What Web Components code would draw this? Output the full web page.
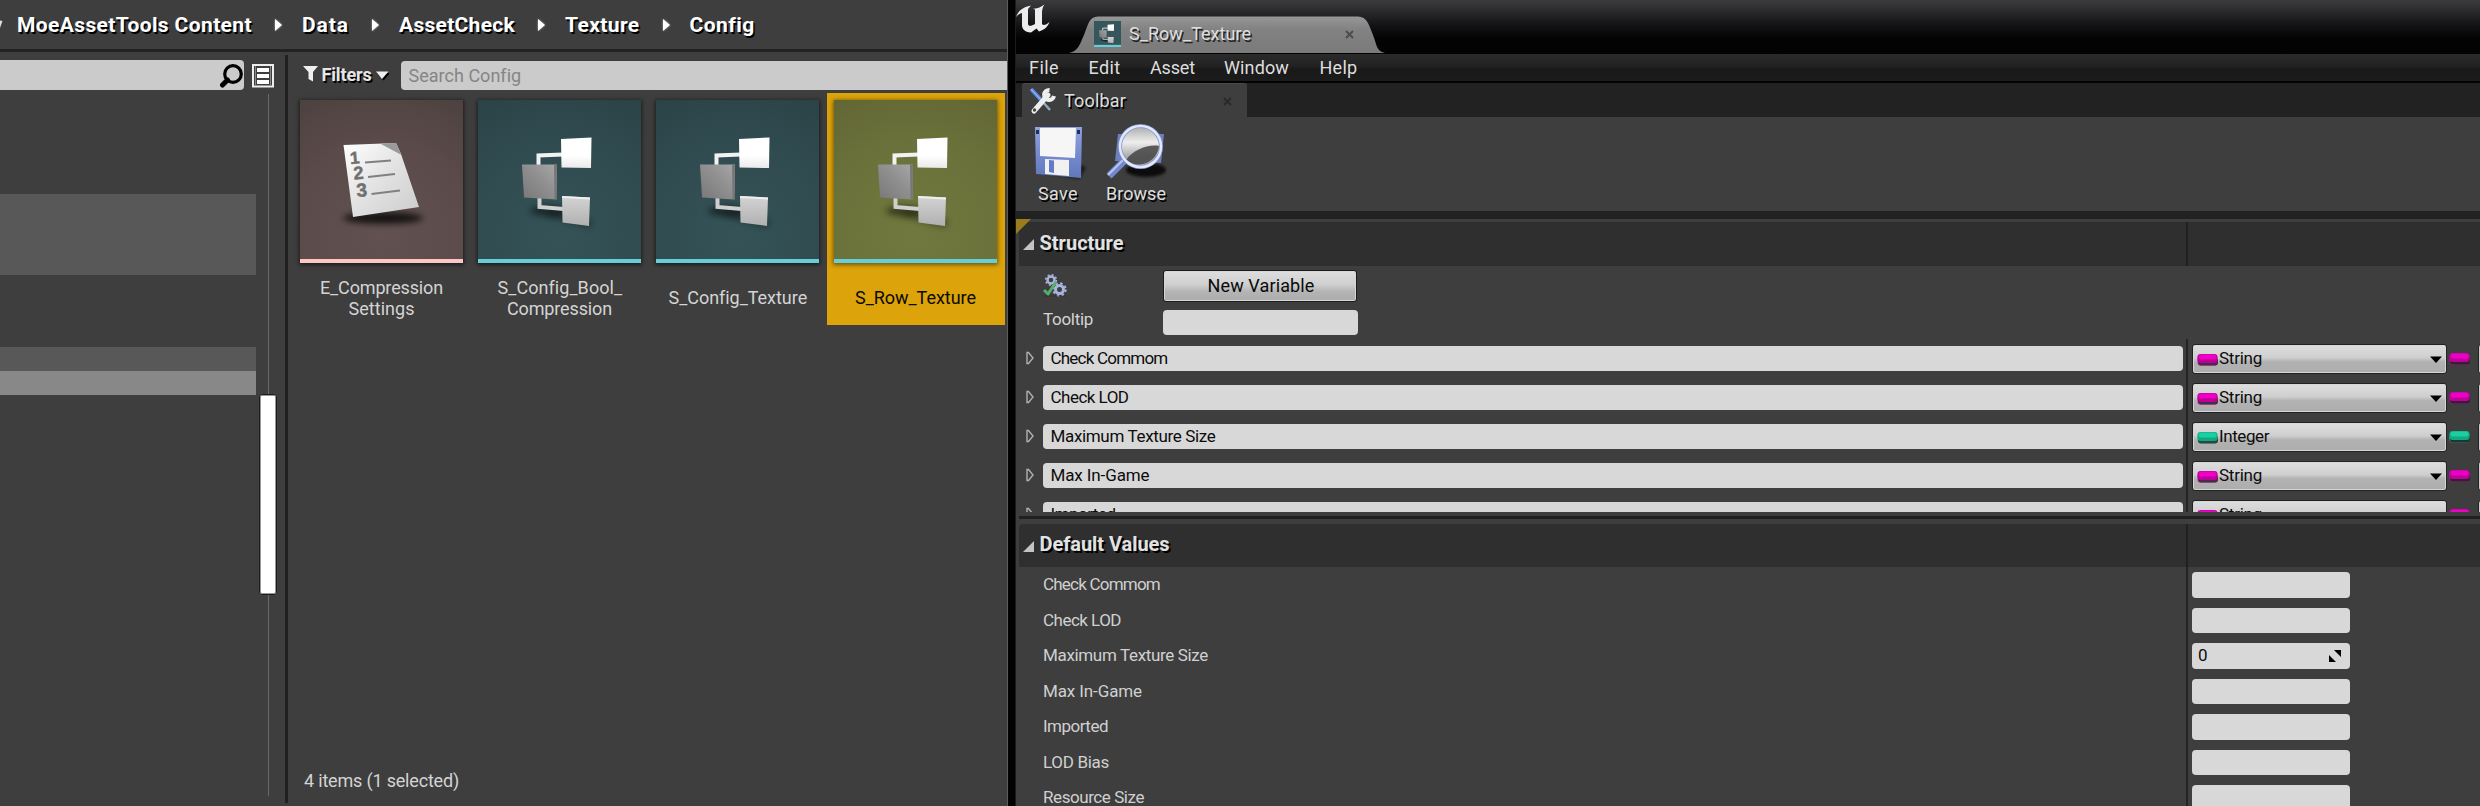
<!DOCTYPE html>
<html lang="en"><head><meta charset="utf-8"><title>Content Browser</title>
<style>
html,body{margin:0;height:806px;overflow:hidden;background:#3e3e3e}
body{display:flex;width:2480px;font:18px Roboto,"Liberation Sans",sans-serif;color:#d4d4d4}
</style></head><body>
<content-browser></content-browser>
<struct-editor></struct-editor>
<script>
const def=(name,html,init)=>customElements.define(name,class extends HTMLElement{
  constructor(){super();this.attachShadow({mode:'open'})}
  connectedCallback(){
    if(this.ready)return;this.ready=true;
    const t=document.createElement('template');
    t.innerHTML=typeof html==='function'?html(this):html;
    this.shadowRoot.append(t.content.cloneNode(true));
    if(init)init(this);
  }
});
const at=(e,n,d='')=>e.hasAttribute(n)?e.getAttribute(n):d;

/* Text label whose tracking is adjusted to fill a given width. */
def('ui-label',`<style>:host{display:inline-block;white-space:pre;flex:none}span{display:inline-block}</style><span><slot></slot></span>`,e=>{
  const w=+at(e,'w',0);if(!w)return;
  const s=e.shadowRoot.querySelector('span'),n=e.textContent.length;
  s.style.letterSpacing=((w-s.getBoundingClientRect().width)/n).toFixed(3)+'px';
  e.style.width=w+'px';
});

const structArt=`
 <g><ellipse cx="69" cy="111" rx="17" ry="5" fill="#000" opacity=".5" filter="url(#b)"/><path d="M66 116L112 128 114 120 84 108Z" fill="#000" opacity=".35" filter="url(#b)"/>
 <path d="M60.500 65V55.500L85 54.500" fill="none" stroke="#f2f2f2" stroke-width="4"/>
 <path d="M61.500 98V107L86 109" fill="none" stroke="#cfcfcf" stroke-width="4"/>
 <path d="M44 64.500L79 64.500 78.500 99.500 46 97.500Z" fill="url(#g1)"/><path d="M76 64.500H79L78.500 99.500 76.500 99Z" fill="#777"/>
 <path d="M83 39L113.500 37.500 113 68 83.500 67.500Z" fill="url(#g2)"/>
 <path d="M84 96L112 97.500 111 126 84.500 122.500Z" fill="url(#g3)"/><path d="M84 96L112 97.500V99.500L84 98Z" fill="#eee"/></g>`;
const defs=`<defs><filter id="b" x="-30%" y="-60%" width="160%" height="220%"><feGaussianBlur stdDeviation="3"/></filter>
 <linearGradient id="g1" x1="0" y1="1" x2="1" y2="0"><stop stop-color="#777"/><stop offset=".6" stop-color="#929292"/><stop offset="1" stop-color="#a8a8a8"/></linearGradient>
 <linearGradient id="g2" x1="0" y1="0" x2="0" y2="1"><stop offset=".6" stop-color="#fff"/><stop offset="1" stop-color="#e9e9e9"/></linearGradient>
 <linearGradient id="g3" x1="0" y1="0" x2="0" y2="1"><stop stop-color="#d4d4d4"/><stop offset="1" stop-color="#b0b0b0"/></linearGradient>
 <linearGradient id="pg" x1="0" y1="0" x2="1" y2="1"><stop stop-color="#fff"/><stop offset=".5" stop-color="#e2e2e2"/><stop offset="1" stop-color="#ccc"/></linearGradient></defs>`;
const enumArt=`<ellipse cx="83" cy="118" rx="40" ry="6" fill="#000" opacity=".75" filter="url(#b)"/>
 <path d="M43.500 45L96 43 101 54 119 107 53 117Z" fill="url(#pg)"/><path d="M80 43.500L96 43 101.500 55Z" fill="#9a9a9a"/>
 <g stroke="#808080" stroke-width="2"><path d="M65 62.500L91 60.500M68 77L95 74M71.500 94L100 90.500"/></g>
 <g font-family="Liberation Sans,sans-serif" font-weight="700" fill="#707070" stroke="#707070" stroke-width=".5"><text font-size="17" transform="translate(50.500 64) rotate(-5)">1</text><text font-size="18" transform="translate(54 79.500) rotate(-5)">2</text><text font-size="19" transform="translate(57 97) rotate(-5)">3</text></g>`;

def('asset-tile',e=>{
 const k=at(e,'kind'),sel=e.hasAttribute('selected');
 const bg=k==='enum'?'radial-gradient(circle at 50% 85%,#625151,#5a4a49 60%,#4d4241)':sel?'radial-gradient(circle at 50% 85%,#70783f,#6a713a 60%,#626634)':'radial-gradient(circle at 50% 85%,#355357,#304b50 60%,#2b4347)';
 return `<style>:host{display:flex;flex-direction:column;box-sizing:border-box;width:178px;height:232px;padding:7px 8px 0 7px;${sel?'background:#dca30b;color:#0a0a00':''}}
 .t{width:163px;height:159px;flex:none;border-bottom:4px solid ${k==='enum'?'#ffc5c4':'#67cdd8'};background:${bg};box-shadow:0 1px 4px 1px ${sel?'rgba(60,50,0,.65)':'rgba(0,0,0,.55)'}}
 svg{display:block}.n{flex:1;display:flex;flex-direction:column;align-items:center;justify-content:center;line-height:21px;padding-top:7px}</style>
 <div class="t"><svg width="163" height="159">${defs}${k==='enum'?enumArt:structArt}</svg></div><div class="n"><slot></slot></div>`});

const crumbArrow=`<svg class="a" width="9" height="14"><path d="M1 1L8 7 1 13Z" fill="#fff"/></svg>`;
def('bread-crumbs',`<style>:host{display:flex;align-items:center;height:49px;border-bottom:3px solid #222;font-size:21px;font-weight:700;color:#fff;text-shadow:1.5px 1.5px 0 #000;box-sizing:content-box}
 ui-label{line-height:49px;padding-top:2px}svg{flex:none}
 .c{width:3px;margin-right:14px}.a{margin:1px 19px 0 22px;filter:drop-shadow(0 0 1px #aaa)}</style>
 <svg class="c" width="3" height="12"><path d="M-3 1L2.500 2 0 9Z" fill="#ddd"/></svg>
 <ui-label w="235">MoeAssetTools Content</ui-label>${crumbArrow}
 <ui-label w="47">Data</ui-label>${crumbArrow}
 <ui-label w="116">AssetCheck</ui-label>${crumbArrow}
 <ui-label w="74.500">Texture</ui-label>${crumbArrow}
 <ui-label w="65">Config</ui-label>`);

def('source-tree',`<style>:host{display:block;width:285px}
 .s{display:flex;height:42px;padding-top:8px;box-sizing:border-box}.in{width:244px;height:30px;background:#cbcbcb;border-radius:0 4px 4px 0;display:flex;justify-content:flex-end;box-sizing:border-box}
 .l{margin:4px 0 0 8px}.b{display:flex;height:702px}.rows{width:256px}.rows div{width:256px}
 .track{flex:none;width:18px;margin-left:3px;background:linear-gradient(#6a6a6a,#6a6a6a) 9px 0/1px 100% no-repeat;padding-top:300px;box-sizing:border-box}
 .th{box-sizing:border-box;height:201px;width:18px;background:#fff;border:1px solid #1c1c1c;border-radius:3px;box-shadow:inset 0 0 0 1px #999}</style>
 <div class="s"><div class="in"><svg width="24" height="30"><circle cx="13" cy="14" r="8.300" fill="none" stroke="#000" stroke-width="3.200"/><path d="M7.500 20L2.500 25" stroke="#000" stroke-width="5" stroke-linecap="round"/></svg></div>
 <svg class="l" width="22" height="24"><path d="M1 1H21V22.500H1Z" fill="#3e3e3e" stroke="#eee" stroke-width="2"/><path d="M3.500 2V22M18.500 2V22" stroke="#888"/><path d="M5 4H17V8H5ZM5 10H17V14H5ZM5 16H17V20H5Z" fill="#fff"/></svg></div>
 <div class="b"><div class="rows"><div style="height:100px"></div><div style="height:81px;background:#585858"></div><div style="height:72px"></div><div style="height:24px;background:#585858"></div><div style="height:24px;background:#888"></div></div>
 <div class="track"><div class="th"></div></div></div>`);

def('asset-view',`<style>:host{display:flex;flex-direction:column;flex:1;height:754px;min-width:0}
 .f{display:flex;height:41px;flex:none}.f>svg{flex:none}.f ui-label{line-height:45px;font-weight:700;color:#e6e6e6;text-shadow:1.5px 1.5px 0 #000;margin-left:2.500px}
 .in{box-sizing:border-box;margin:9px 0 0 12px;flex:1;height:29px;background:#cbcbcb;border-radius:4px 0 0 4px;padding-left:7.500px}.in ui-label{line-height:30px;font-weight:400;color:#858585;text-shadow:none;margin:0}
 .g{display:flex;padding-left:5px;flex:1}.st{padding-left:16px;height:47px;line-height:44px}</style>
 <div class="f"><svg width="16" height="32" style="margin-left:15px"><path d="M0 14H15L10 20V29.500L5.500 27V20Z" fill="#eee"/></svg><ui-label w="50">Filters</ui-label>
 <svg width="13" height="30" style="margin-left:4.500px"><path d="M1 21H14L7.500 28.500Z" fill="#000"/><path d="M0 19.500H12.500L6 27Z" fill="#eee"/></svg><div class="in"><ui-label w="112">Search Config</ui-label></div></div>
 <div class="g"><asset-tile kind="enum"><ui-label w="123">E_Compression</ui-label><ui-label w="66">Settings</ui-label></asset-tile>
 <asset-tile kind="struct"><ui-label w="124">S_Config_Bool_</ui-label><ui-label w="105">Compression</ui-label></asset-tile>
 <asset-tile kind="struct"><ui-label w="138">S_Config_Texture</ui-label></asset-tile>
 <asset-tile kind="struct" selected><ui-label w="121">S_Row_Texture</ui-label></asset-tile></div>
 <div class="st"><ui-label w="155">4 items (1 selected)</ui-label></div>`);

def('content-browser',`<style>:host{display:block;width:1007px;flex:none;border-right:1px solid #5c5c5c;overflow:hidden}.m{display:flex;height:754px}
 .d{width:3px;background:#202020;margin:3px 0;height:748px}</style>
 <bread-crumbs></bread-crumbs><div class="m"><source-tree></source-tree><div class="d"></div><asset-view></asset-view></div>`);

def('window-title',`<style>:host{display:flex;height:54px;background:linear-gradient(#3b3b3d 0,#2c2c2e 10px,#121214 26px,#040405 38px,#020203);}
 svg{flex:none;display:block}.tab{display:grid;width:316px;height:54px;margin-left:19px;}.tab>*{grid-area:1/1}.c{display:flex;padding:21px 0 0 25px;text-shadow:1.5px 1.5px 0 #222;color:#dedede}
 ui-label{line-height:27px;margin-left:8px;}</style>
 <svg width="34" height="36"><path d="M0 17C2 11 7 7 15 5.500L12 9V23.500C12 26.500 15 26.500 19 24V9.500L16 8.500C20 9.500 25 7 28.500 4.500C26 8 26 11 26 14V24C27.500 26 30 25 33.500 22C31 28.500 27 30 23 31.500L20.500 28.500L15 32.500C8.500 32 6 29 6 25V13C3.500 13.500 1.500 15 0 17Z" fill="#ededed"/></svg>
 <div class="tab"><svg width="316" height="54"><defs><linearGradient id="t" x1="0" y1="0" x2="0" y2="1"><stop stop-color="#979797"/><stop offset=".35" stop-color="#828282"/><stop offset="1" stop-color="#7a7a7a"/></linearGradient></defs>
 <path d="M0 53C10 51 11 43 15 35C19 25 20 16.500 29 16.500H289C298 16.500 300 25 304 35C308 45 307 51 316 53Z" fill="url(#t)"/></svg>
 <div class="c"><svg width="27" height="26" viewBox="20 22 126 121" preserveAspectRatio="none">${defs}<rect x="20" y="22" width="126" height="121" fill="#35565a"/>${structArt}<rect x="20" y="133" width="126" height="10" fill="#67cdd8"/></svg>
 <ui-label w="122" style="margin-top:-1px">S_Row_Texture</ui-label><svg width="9" height="9" style="margin:9px 0 0 94px"><path d="M1 1L8 8M8 1L1 8" stroke="#4c4c4c" stroke-width="2"/></svg></div></div>`);

def('menu-bar',`<style>:host{display:flex;height:27px;padding-left:13px;background:linear-gradient(#2b2b2b,#222 12px,#191919 15px,#1c1c1c);border-bottom:2px solid #030303;color:#dedede}ui-label{line-height:28px}</style>
 <ui-label w="30" style="margin-right:29.500px">File</ui-label><ui-label w="32" style="margin-right:29.500px">Edit</ui-label><ui-label w="45" style="margin-right:29px">Asset</ui-label><ui-label w="65" style="margin-right:30.500px">Window</ui-label><ui-label w="38">Help</ui-label>`);

def('tool-bar',`<style>:host{display:block;height:128px;border-bottom:8px solid #222}
 .r{background:#222;height:34px;padding-left:6px}.t{display:flex;box-sizing:border-box;height:34px;width:225px;background:#3e3e3e;border-top:1px solid #484848;border-radius:3px 3px 0 0;padding-left:8px}
 ui-label{text-shadow:1.5px 1.5px 0 #000;color:#dedede}.t ui-label{line-height:33px;margin-left:8px}.b{display:flex}.b>div{display:flex;flex-direction:column;align-items:center}.b ui-label{line-height:26px}svg{display:block}</style>
 <div class="r"><div class="t"><svg width="26" height="28" style="margin-top:3px"><path d="M1 2L13 15" stroke="#5d87dd" stroke-width="4"/><path d="M1 2L13 15" stroke="#a9c4f5" stroke-width="1"/><path d="M12 14L20 23" stroke="#8faabd" stroke-width="2.500"/><path d="M4 24L18 8" stroke="#eee" stroke-width="5" stroke-linecap="round"/><path d="M19.500 3A5 5 0 1 0 24 9" fill="none" stroke="#eee" stroke-width="4"/><circle cx="4.500" cy="23" r="1.700" fill="#444"/></svg>
 <ui-label w="62">Toolbar</ui-label><svg width="9" height="9" style="margin:13px 0 0 97px"><path d="M1 1L8 8M8 1L1 8" stroke="#2a2a2a" stroke-width="2"/></svg></div></div>
 <div class="b"><div style="margin-left:17px;width:50px"><svg width="56" height="64" style="margin-left:3px"><defs><linearGradient id="s" x1="0" y1="0" x2="0" y2="1"><stop stop-color="#90a3e2"/><stop offset="1" stop-color="#6077bd"/></linearGradient><filter id="f"><feGaussianBlur stdDeviation="1.500"/></filter></defs>
 <path d="M6 55L47 62 54 51 48 47Z" fill="#000" opacity=".6" filter="url(#f)"/><path d="M3 10L50 10 49 61 4 57Z" fill="url(#s)"/><path d="M8 11H44L43 41 8 39Z" fill="#f6f6f6"/><path d="M13 42L37 43V59L13 57Z" fill="#f1f1f1"/><path d="M17 43L22 43.500V56L17 55Z" fill="#617bc5"/><path d="M4 13H7V17H4ZM45 13H48V17H45Z" fill="#243056"/></svg><ui-label w="40">Save</ui-label></div>
 <div style="margin-left:22px;width:62px"><svg width="62" height="64"><defs><linearGradient id="l" x1="0" y1="0" x2="0" y2="1"><stop stop-color="#aaa"/><stop offset=".4" stop-color="#eee"/><stop offset=".75" stop-color="#aaa"/></linearGradient></defs>
 <ellipse cx="41" cy="53" rx="20" ry="7" fill="#000" opacity=".8" filter="url(#f)"/><path d="M13 17L59 17 56 46 10 44Z" fill="#6e80bd"/><path d="M19 44L4 59" stroke="#7389cd" stroke-width="7"/><path d="M18 43L3 58" stroke="#b9c6f1" stroke-width="2"/><circle cx="35.500" cy="29.500" r="20.500" fill="url(#l)" stroke="#7f91ca" stroke-width="4"/><path d="M21 43C28 33 43 27 54 29C53 43 36 54 21 43Z" fill="#444" opacity=".85"/><circle cx="35.500" cy="29.500" r="20.500" fill="none" stroke="#e2e8fb" stroke-width="2.500"/></svg><ui-label w="60">Browse</ui-label></div></div>`);

def('section-head',`<style>:host{display:flex;box-sizing:border-box;height:44px;margin-left:3px;background:linear-gradient(90deg,transparent 1167px,#202020 1167px,#202020 1169px,transparent 1169px),#2f2f2f;font-size:20px;font-weight:700;color:#e2e2e2;text-shadow:2px 2px 0 #000}
 svg{margin:16px 5.500px 0 4px;flex:none}</style><svg width="11" height="13"><path d="M11 1V12H0Z" fill="#c4c4c4"/></svg><slot></slot>`);

const pin=(c,d)=>`<svg width="23" height="15"><rect x="1" y="3" width="21" height="11" rx="4" fill="${c}" opacity=".45"/><rect x="2" y="6" width="20" height="7.500" rx="3" fill="#1c1c1c" opacity=".75"/><rect x="1.500" y="2" width="20" height="9" rx="3" fill="${d}"/><rect x="2.500" y="2.500" width="18" height="5" rx="2.500" fill="${c}"/></svg>`;
def('variable-row',e=>{const i=at(e,'type')==='Integer',p=i?pin('#1ad0a0','#12a982'):pin('#ee00c4','#bd009c');
 return `<style>:host{display:flex;height:39px;flex:none;align-items:flex-start;font-size:17px;color:#0c0c0c}
 .a{margin:12px 9px 0 10px;flex:none}.in{box-sizing:border-box;width:1140px;height:25px;margin-top:7px;border-radius:4px;background:#d8d8d8;padding-left:7.500px;line-height:24px;flex:none}
 .l{width:2px;margin:0 4px 0 3px;background:#232323;height:39px;flex:none}.c{display:flex;box-sizing:border-box;flex:none;width:255px;height:30px;margin-top:4.500px;border:1px solid #222;border-radius:3px;background:linear-gradient(#dedede,#cfcfcf 45%,#b2b2b2 60%,#adadad);box-shadow:inset 0 0 0 1px #d6d6d6;padding-left:3px;line-height:27px}
 .c svg{flex:none;margin-top:7px}.p{margin:11px 0 0 1px;flex:none}.x{margin:4.500px 0 0 7px;box-sizing:border-box;width:20px;height:30px;background:#ccc;border:1px solid #222;border-radius:3px;flex:none}</style>
 <svg class="a" width="8" height="14"><path d="M1 1.500V12.500H2.500L7 7 2.500 1.500Z" fill="none" stroke="#b0b0b0" stroke-width="1.400"/></svg><div class="in"><slot></slot></div><div class="l"></div>
 <div class="c">${p}<ui-label w="${i?50:43}">${at(e,'type')}</ui-label><svg width="12" height="8" style="margin:11px 4px 0 auto"><path d="M0 .500H12L6 7Z" fill="#000"/></svg></div><div class="p">${p}</div><div class="x"></div>`});

def('value-row',e=>`<style>:host{display:flex;height:35.500px;flex:none;font-size:17px;line-height:35px;color:#d0d0d0}
 .n{width:1143px;padding-left:27px;flex:none}.l{width:2px;background:#232323;margin-right:4px;flex:none}.in{box-sizing:border-box;width:158px;height:25.500px;margin-top:5px;border-radius:4px;background:#d8d8d8;color:#0c0c0c;display:flex;line-height:25px;padding:0 9px 0 6px;justify-content:space-between}</style>
 <div class="n"><slot></slot></div><div class="l"></div><div class="in">${at(e,'value')?`<span>${at(e,'value')}</span><svg width="12" height="13" style="margin-top:7px"><path d="M5 0H12V7ZM0 5L7 12H0Z" fill="#000"/></svg>`:''}</div>`);

def('structure-panel',`<style>:host{display:flex;flex-direction:column;height:293px;position:relative}
 .corner{position:absolute;left:0;top:0}
 section-head{margin-top:3px;flex:none}.top{display:flex;flex-direction:column;height:73px;flex:none;padding-left:27px}.r{display:flex;font-size:17px}.r .k{width:120px;flex:none}
 .btn{box-sizing:border-box;width:194px;height:32px;margin-top:4px;border:1px solid #1c1c1c;border-radius:3px;background:linear-gradient(#dedede,#cfcfcf 45%,#b3b3b3 70%,#adadad);box-shadow:inset 0 0 0 1px #d6d6d6;text-align:center;color:#0a0a0a;font-size:18px;line-height:30px;padding-left:2px}
 .in{width:195px;height:25px;margin-top:8px;border-radius:4px;background:#d8d8d8}.rows{overflow:hidden;display:flex;flex-direction:column;height:173px}</style>
 <section-head><ui-label w="84" style="line-height:42px">Structure</ui-label></section-head><svg class="corner" width="16" height="16"><path d="M0 0H15L0 15Z" fill="#9b7b1c"/></svg>
 <div class="top"><div class="r"><div class="k"><svg width="24" height="24" style="margin-top:8px"><g fill="none" stroke="#a8b4dc"><circle cx="8" cy="6" r="3.500" stroke-width="2.500"/><circle cx="8" cy="6" r="5.300" stroke-width="1.600" stroke-dasharray="2 2.160"/><circle cx="16.500" cy="15.500" r="4" stroke-width="3"/><circle cx="16.500" cy="15.500" r="6.200" stroke-width="2" stroke-dasharray="2.430 2.430"/></g><path d="M1 16L5 20 13 8" fill="none" stroke="#52b06b" stroke-width="3"/><path d="M1 22H23" stroke="#222" opacity=".5"/></svg></div><div class="btn"><ui-label w="107">New Variable</ui-label></div></div>
 <div class="r"><div class="k" style="line-height:35px;height:33px"><ui-label w="50">Tooltip</ui-label></div><div class="in"></div></div></div>
 <div class="rows"><variable-row type="String"><ui-label w="117">Check Commom</ui-label></variable-row><variable-row type="String"><ui-label w="78">Check LOD</ui-label></variable-row><variable-row type="Integer"><ui-label w="165">Maximum Texture Size</ui-label></variable-row><variable-row type="String"><ui-label w="99">Max In-Game</ui-label></variable-row><variable-row type="String"><ui-label w="65">Imported</ui-label></variable-row></div>`);

def('defaults-panel',`<style>:host{display:flex;flex-direction:column}.s{height:3px;background:#202020;margin:4px 0 5px 3px;flex:none}section-head{flex:none;height:43px;border-radius:4px 0 0 0}</style>
 <div class="s"></div><section-head><ui-label w="130" style="line-height:40px">Default Values</ui-label></section-head>
 <value-row><ui-label w="117">Check Commom</ui-label></value-row><value-row><ui-label w="78">Check LOD</ui-label></value-row><value-row value="0"><ui-label w="165">Maximum Texture Size</ui-label></value-row><value-row><ui-label w="99">Max In-Game</ui-label></value-row><value-row><ui-label w="65">Imported</ui-label></value-row><value-row><ui-label w="66">LOD Bias</ui-label></value-row><value-row><ui-label w="101">Resource Size</ui-label></value-row>`);

def('struct-editor',`<style>:host{display:block;width:1464px;height:806px;overflow:hidden;flex:none;border-left:7px solid #020203;padding-left:1px;background:linear-gradient(90deg,#1c1c1d 1px,#3e3e3e 1px)}</style>
 <window-title></window-title><menu-bar></menu-bar><tool-bar></tool-bar><structure-panel></structure-panel><defaults-panel></defaults-panel>`);
</script></body></html>
